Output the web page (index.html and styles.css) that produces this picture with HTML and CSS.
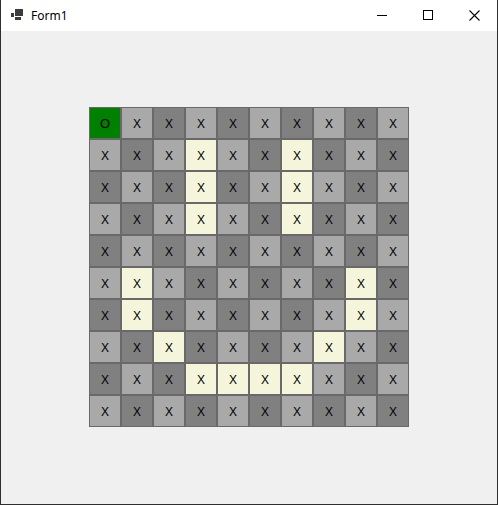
FILE: index.html
```html
<!DOCTYPE html>
<html lang="en">
<head>
  <meta charset="UTF-8">
  <title>Form1</title>
  <link rel="stylesheet" href="styles.css">
</head>
<body>
  <div class="window">
    <div class="titlebar">
      <svg class="app-icon" width="16" height="16" viewBox="0 0 16 16">
        <rect x="5" y="2" width="8" height="7" fill="#3c3c3c"/>
        <rect x="1" y="6" width="3" height="4" fill="#3c3c3c"/>
        <rect x="5" y="10" width="6" height="3" fill="#3c3c3c"/>
      </svg>
      <span class="caption">Form1</span>
      <div class="caption-buttons">
        <div class="cap-btn">
          <svg width="10" height="10" viewBox="0 0 10 10"><path d="M0 5.5h10" stroke="#000" stroke-width="1"/></svg>
        </div>
        <div class="cap-btn">
          <svg width="10" height="10" viewBox="0 0 10 10"><rect x="0.5" y="0.5" width="9" height="9" fill="none" stroke="#000" stroke-width="1"/></svg>
        </div>
        <div class="cap-btn">
          <svg width="11" height="11" viewBox="0 0 11 11"><path d="M0.5 0.5L10.5 10.5M10.5 0.5L0.5 10.5" stroke="#000" stroke-width="1.1"/></svg>
        </div>
      </div>
    </div>
    <div class="client">
      <div class="board" id="board"></div>
    </div>
  </div>
  <script>
    // highlighted cells per row
    var path = {1:[3,6], 2:[3,6], 3:[3,6], 5:[1,8], 6:[1,8], 7:[2,7], 8:[3,4,5,6]};
    var html = '';
    for (var r = 0; r < 10; r++) {
      for (var c = 0; c < 10; c++) {
        var cls = (r + c) % 2 ? 'cell light' : 'cell dark';
        var txt = 'X';
        if (r === 0 && c === 0) { cls = 'cell start'; txt = 'O'; }
        else if ((path[r] || []).indexOf(c) >= 0) cls = 'cell trail';
        html += '<div class="' + cls + '">' + txt + '</div>';
      }
    }
    document.getElementById('board').innerHTML = html;
  </script>
</body>
</html>
```

FILE: styles.css
```css
body {
  margin: 0;
  font-family: 'Liberation Sans', Arial, sans-serif;
}
.window {
  width: 498px;
  height: 505px;
  box-sizing: border-box;
  border: 1px solid #2f2f2f;
  border-top: none;
  background: #f0f0f0;
  display: flex;
  flex-direction: column;
}
.titlebar {
  height: 31px;
  background: #fff;
  display: flex;
  align-items: center;
  flex-shrink: 0;
}
.app-icon {
  margin-left: 9px;
  margin-top: -1px;
}
.caption {
  margin-left: 5px;
  font-family: 'Noto Sans', 'Open Sans', sans-serif;
  font-size: 12px;
  color: #000;
  margin-top: -1px;
}
.caption-buttons {
  margin-left: auto;
  display: flex;
  height: 100%;
}
.cap-btn {
  width: 46px;
  display: flex;
  align-items: center;
  justify-content: center;
  margin-top: -1px;
}
.client {
  flex: 1;
  padding: 76px 0 0 88px;
}
.board {
  display: grid;
  grid-template-columns: repeat(10, 32px);
  grid-auto-rows: 32px;
  width: 320px;
}
.cell {
  box-sizing: border-box;
  border: 1px solid #696969;
  display: flex;
  align-items: center;
  justify-content: center;
  font-size: 12px;
  color: #000;
  padding-top: 1px;
}
.cell.dark { background: #808080; }
.cell.light { background: #a9a9a9; }
.cell.trail { background: #f5f5dc; }
.cell.start { background: #008000; font-size: 13px; }
```
